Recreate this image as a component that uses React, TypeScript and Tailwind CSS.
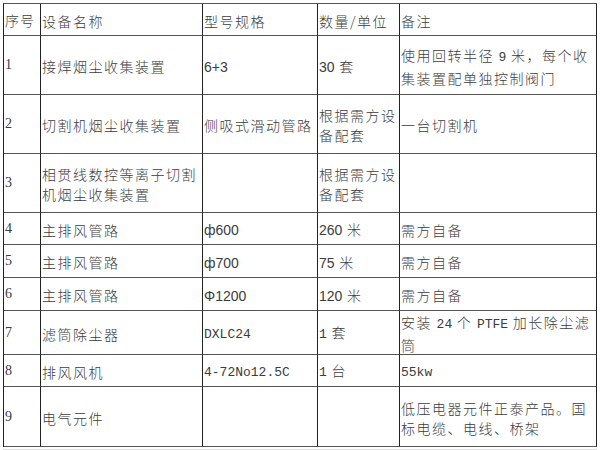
import React from "react";

// SimSun-like half-width Latin
const M = ({ children }: { children: React.ReactNode }) => (
  <span className="font-['Liberation_Mono',monospace] text-[13px] tracking-normal">
    {children}
  </span>
);

// Arial-like Latin
const S = ({ children }: { children: React.ReactNode }) => (
  <span className="font-['Liberation_Sans',sans-serif] tracking-normal">{children}</span>
);

const colClasses = [
  "w-[37px]",
  "w-[162px]",
  "w-[115px]",
  "w-[82px]",
  "w-[197px]",
];

type Row = { h: string; no: React.ReactNode; cells: React.ReactNode[] };

const rows: Row[] = [
  {
    h: "h-[32px]",
    no: "序号",
    cells: ["设备名称", "型号规格", "数量/单位", "备注"],
  },
  {
    h: "h-[59px]",
    no: "1",
    cells: [
      "接焊烟尘收集装置",
      <S>6+3</S>,
      <>
        <S>30</S> 套
      </>,
      <>
        使用回转半径 <M>9</M> 米，每个收
        <br />
        集装置配单独控制阀门
      </>,
    ],
  },
  {
    h: "h-[59px]",
    no: "2",
    cells: [
      "切割机烟尘收集装置",
      "侧吸式滑动管路",
      <>
        根据需方设
        <br />
        备配套
      </>,
      "一台切割机",
    ],
  },
  {
    h: "h-[59px]",
    no: "3",
    cells: [
      <>
        相贯线数控等离子切割
        <br />
        机烟尘收集装置
      </>,
      "",
      <>
        根据需方设
        <br />
        备配套
      </>,
      "",
    ],
  },
  {
    h: "h-[32px]",
    no: "4",
    cells: ["主排风管路", <S>ф600</S>, <><S>260</S> 米</>, "需方自备"],
  },
  {
    h: "h-[33px]",
    no: "5",
    cells: ["主排风管路", <S>ф700</S>, <><S>75</S> 米</>, "需方自备"],
  },
  {
    h: "h-[33px]",
    no: "6",
    cells: ["主排风管路", <S>Φ1200</S>, <><S>120</S> 米</>, "需方自备"],
  },
  {
    h: "h-[44px]",
    no: "7",
    cells: [
      "滤筒除尘器",
      <M>DXLC24</M>,
      <>
        <M>1</M> 套
      </>,
      <>
        安装 <M>24</M> 个 <M>PTFE</M> 加长除尘滤
        <br />
        筒
      </>,
    ],
  },
  {
    h: "h-[32px]",
    no: "8",
    cells: [
      "排风风机",
      <M>4-72No12.5C</M>,
      <>
        <M>1</M> 台
      </>,
      <M>55kw</M>,
    ],
  },
  {
    h: "h-[60px]",
    no: "9",
    cells: [
      "电气元件",
      "",
      "",
      <>
        低压电器元件正泰产品。国
        <br />
        标电缆、电线、桥架
      </>,
    ],
  },
];

export default function App() {
  return (
    <div className="w-[600px] h-[450px] bg-white pt-[3px] pl-[3px] overflow-hidden">
      <div className="w-[594px] border-l border-t border-l-[#222] border-t-[#555] font-['Noto_Sans_CJK_SC',sans-serif] font-light text-[14px] leading-[20px] tracking-[1.5px] text-[#3c3c3c]">
        {rows.map((row, i) => (
          <div key={i} className={`flex ${row.h}`}>
            <div
              className={`${colClasses[0]} shrink-0 flex items-center pl-px border-r border-b border-r-[#222] border-b-[#555] whitespace-nowrap tracking-[1px]`}
            >
              {i === 0 ? row.no : (
                <span className="font-['Liberation_Serif',serif] tracking-normal">{row.no}</span>
              )}
            </div>
            {row.cells.map((c, j) => (
              <div
                key={j}
                className={`${colClasses[j + 1]} shrink-0 flex items-center pl-px pt-[2px] border-r border-b border-r-[#222] border-b-[#555] whitespace-nowrap`}
              >
                <div>{c}</div>
              </div>
            ))}
          </div>
        ))}
      </div>
      <div className="w-[594px] h-px mt-[2px] bg-[#ddd]" />
    </div>
  );
}
